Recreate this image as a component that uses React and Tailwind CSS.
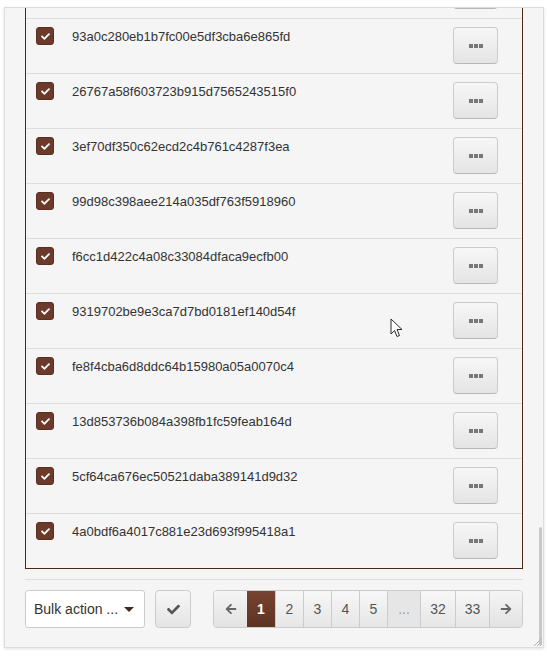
import { FaCheck, FaArrowLeft, FaArrowRight } from 'react-icons/fa';

const hashes = [
  '',
  '93a0c280eb1b7fc00e5df3cba6e865fd',
  '26767a58f603723b915d7565243515f0',
  '3ef70df350c62ecd2c4b761c4287f3ea',
  '99d98c398aee214a035df763f5918960',
  'f6cc1d422c4a08c33084dfaca9ecfb00',
  '9319702be9e3ca7d7bd0181ef140d54f',
  'fe8f4cba6d8ddc64b15980a05a0070c4',
  '13d853736b084a398fb1fc59feab164d',
  '5cf64ca676ec50521daba389141d9d32',
  '4a0bdf6a4017c881e23d693f995418a1',
];

const pages = [
  { label: '1', w: 'w-[28px]', active: true },
  { label: '2', w: 'w-[28px]' },
  { label: '3', w: 'w-[28px]' },
  { label: '4', w: 'w-[28px]' },
  { label: '5', w: 'w-[28px]' },
  { label: '...', w: 'w-[33px]', gap: true },
  { label: '32', w: 'w-[35px]' },
  { label: '33', w: 'w-[34px]' },
];

function Row({ hash }) {
  return (
    <div className="flex h-[55px] items-start border-t border-[#dddddd] pt-2 pl-[10px] pr-6">
      {/* checked box */}
      <div className="flex h-[18px] w-[18px] shrink-0 items-center justify-center rounded-[3px] bg-[#6b3a2b] border border-[#5a2f22]">
        <FaCheck className="h-[9px] w-[9px] text-white" />
      </div>
      <div className="ml-[18px] mt-[1px] flex-1 text-[13px] leading-[18px] text-[#333333]">{hash}</div>
      <button className="flex h-[37px] w-[45px] shrink-0 items-center justify-center gap-[1px] rounded-[4px] border border-[#cccccc] border-b-[#b8b8b8] bg-linear-to-b from-[#f7f7f7] to-[#e4e4e4]">
        <span className="h-[4px] w-[4px] bg-[#777777]" />
        <span className="h-[4px] w-[4px] bg-[#777777]" />
        <span className="h-[4px] w-[4px] bg-[#777777]" />
      </button>
    </div>
  );
}

export default function App() {
  return (
    <div className="relative min-h-[657px] bg-white pt-[7px] pl-[4px]" style={{ fontFamily: '"Liberation Sans", Arial, sans-serif' }}>
      <div className="relative flex h-[641px] w-[540px] flex-col justify-end overflow-hidden border border-[#dddddd] bg-[#f5f5f5] px-5 pb-[19px] shadow-[0_1px_3px_rgba(0,0,0,0.12)]">
        {/* table box, scrolled to its end */}
        <div className="shrink-0 border border-[#4a271b]">
          {hashes.map((h, i) => (
            <Row key={i} hash={h} />
          ))}
        </div>

        <div className="mt-[10px] h-px shrink-0 bg-[#dddddd]" />

        {/* bottom controls */}
        <div className="mt-[10px] flex h-[38px] shrink-0 items-center">
          <div className="flex h-[38px] w-[120px] items-center justify-between rounded-[3px] border border-[#cccccc] bg-white pl-[8px] pr-[10px] text-[14px] text-[#333333]">
            <span>Bulk action ...</span>
            <span className="h-0 w-0 border-x-[5px] border-t-[5px] border-x-transparent border-t-[#3a2a22]" />
          </div>
          <button className="ml-[10px] flex h-[38px] w-[36px] items-center justify-center rounded-[4px] border border-[#cccccc] bg-linear-to-b from-[#f7f7f7] to-[#e4e4e4]">
            <FaCheck className="h-[13px] w-[13px] text-[#555555]" />
          </button>

          <div className="ml-auto flex h-[38px] overflow-hidden rounded-[4px] border border-[#cccccc]">
            <div className="flex w-[33px] items-center justify-center bg-linear-to-b from-[#f5f5f5] to-[#e2e2e2]">
              <FaArrowLeft className="h-[12px] w-[12px] text-[#666666]" />
            </div>
            {pages.map((p) => (
              <div
                key={p.label}
                className={
                  p.active
                    ? `${p.w} flex items-center justify-center bg-linear-to-b from-[#774331] to-[#5d3324] text-[14px] font-bold text-white`
                    : p.gap
                    ? `${p.w} flex items-center justify-center border-l border-[#cccccc] bg-[#e6e6e6] text-[14px] text-[#999999]`
                    : `${p.w} flex items-center justify-center border-l border-[#cccccc] bg-linear-to-b from-[#f7f7f7] to-[#e6e6e6] text-[14px] text-[#555555]`
                }
              >
                {p.label}
              </div>
            ))}
            <div className="flex w-[33px] items-center justify-center border-l border-[#cccccc] bg-linear-to-b from-[#f5f5f5] to-[#e2e2e2]">
              <FaArrowRight className="h-[12px] w-[12px] text-[#666666]" />
            </div>
          </div>
        </div>

        {/* overlay scrollbar thumb */}
        <div className="absolute right-[1px] top-[519px] h-[118px] w-[3px] rounded-full bg-[#c8c8c8]" />
        {/* resize grip */}
        <svg className="absolute bottom-0 right-0" width="12" height="12" viewBox="0 0 12 12">
          <path d="M11 3 L3 11 M11 6 L6 11 M11 9 L9 11" stroke="#b0b0b0" strokeWidth="1" />
        </svg>
      </div>

      {/* mouse pointer */}
      <svg className="absolute left-[390px] top-[318px]" width="14" height="21" viewBox="0 0 14 21">
        <path d="M1 1 L1 16 L4.5 12.5 L7 18.5 L9.5 17.5 L7 11.5 L12 11.5 Z" fill="white" stroke="#2b2b2b" strokeWidth="1" strokeLinejoin="round" />
      </svg>
    </div>
  );
}
